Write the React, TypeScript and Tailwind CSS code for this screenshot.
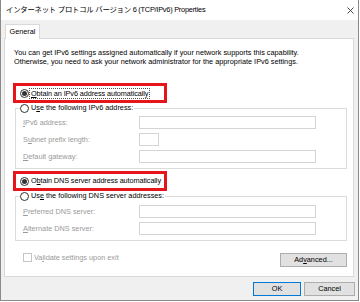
import React from "react";

function Radio({ checked }: { checked?: boolean }) {
  return (
    <span className="w-[9px] h-[9px] rounded-full border border-[#333333] bg-white flex items-center justify-center shrink-0">
      {checked && <span className="w-[5px] h-[5px] rounded-full bg-[#333333]" />}
    </span>
  );
}

function Field({ k, rest, pre, small }: { k: string; rest: string; pre?: string; small?: boolean }) {
  return (
    <div className="flex items-center h-[13px]">
      <span className="w-[116px] text-[#9a9a9a]">
        {pre}
        <span className="underline underline-offset-1">{k}</span>
        {rest}
      </span>
      <span className={small ? "w-[20px] h-[13px] border border-[#d4d4d4] bg-white" : "w-[177px] h-[13px] border border-[#d4d4d4] bg-white"} />
    </div>
  );
}

export default function App() {
  return (
    <div className="w-[360px] h-[302px] bg-white whitespace-nowrap font-['Liberation_Sans','Noto_Sans_CJK_JP',sans-serif] text-[7.3px] leading-[10px] text-black">
      <div className="w-[359px] h-[301px] border-x border-b border-[#8a8a8a] flex flex-col">
        <div className="h-[20px] shrink-0 bg-white flex items-center justify-between pl-[5px] pr-[4px]">
          <span className="text-[7.4px] tracking-[-0.25px]">インターネット プロトコル バージョン 6 (TCP/IPv6) Properties</span>
          <svg width="7" height="7" viewBox="0 0 7 7" className="block">
            <path d="M0.5 0.5 L6.5 6.5 M6.5 0.5 L0.5 6.5" stroke="#333" strokeWidth="0.9" fill="none" />
          </svg>
        </div>
        <div className="flex-1 bg-[#f0f0f0] pt-[4px] pl-[3px] flex flex-col">
          <div className="ml-[1px] w-[35px] h-[15px] -mb-[1px] bg-white border border-b-0 border-[#d9d9d9] relative z-10 flex items-center justify-center">
            General
          </div>
          <div className="w-[350px] h-[239px] bg-white border border-[#d9d9d9] flex flex-col">
            <p className="mt-[9px] ml-[9px] leading-[9px]">
              You can get IPv6 settings assigned automatically if your network supports this capability.
              <br />
              Otherwise, you need to ask your network administrator for the appropriate IPv6 settings.
            </p>

            <div className="mt-[17px] ml-[8px] w-[154px] h-[20px] border-[3px] border-[#e8141c] flex items-center pl-[4px] gap-[1px]">
              <Radio checked />
              <span className="outline outline-1 outline-dotted outline-[#555555] px-[1px] leading-[9px] tracking-[-0.1px]">
                <span className="underline underline-offset-1">O</span>btain an IPv6 address automatically
              </span>
            </div>

            <fieldset className="ml-[10px] w-[332px] border border-[#dcdcdc] pl-[7px] pt-[3px] pb-[5px]">
              <legend className="-ml-[3px] flex items-center gap-[2px] h-[10px] pr-[1px]">
                <Radio />
                <span>
                  U<span className="underline underline-offset-1">s</span>e the following IPv6 address:
                </span>
              </legend>
              <div className="flex flex-col gap-[4px]">
                <Field k="I" rest="Pv6 address:" />
                <Field pre="S" k="u" rest="bnet prefix length:" small />
                <Field k="D" rest="efault gateway:" />
              </div>
            </fieldset>

            <div className="mt-[2px] ml-[8px] w-[154px] h-[20px] border-[3px] border-[#e8141c] flex items-center pl-[4px] gap-[2px]">
              <Radio checked />
              <span className="whitespace-nowrap tracking-[-0.1px]">
                O<span className="underline underline-offset-1">b</span>tain DNS server address automatically
              </span>
            </div>

            <fieldset className="ml-[10px] w-[332px] border border-[#dcdcdc] pl-[7px] pt-[4px] pb-[5px]">
              <legend className="-ml-[3px] flex items-center gap-[2px] h-[10px] pr-[1px]">
                <Radio />
                <span>
                  Us<span className="underline underline-offset-1">e</span> the following DNS server addresses:
                </span>
              </legend>
              <div className="flex flex-col gap-[4px]">
                <Field k="P" rest="referred DNS server:" />
                <Field k="A" rest="lternate DNS server:" />
              </div>
            </fieldset>

            <div className="mt-[12px] ml-[10px] w-[332px] flex items-start justify-between">
              <div className="flex items-center gap-[2px] pl-[8px] h-[9px]">
                <span className="w-[9px] h-[9px] border border-[#c4c4c4] bg-white shrink-0" />
                <span className="text-[#9a9a9a]">
                  Va<span className="underline underline-offset-1">l</span>idate settings upon exit
                </span>
              </div>
              <div className="w-[67px] h-[14px] bg-[#e1e1e1] border border-[#adadad] flex items-center justify-center">
                <span>
                  Ad<span className="underline underline-offset-1">v</span>anced...
                </span>
              </div>
            </div>
          </div>

          <div className="flex justify-end gap-[3px] pr-[3px] mt-[5px]">
            <div className="w-[48px] h-[14px] bg-[#e1e1e1] border border-[#0078d7] flex items-center justify-center">OK</div>
            <div className="w-[51px] h-[14px] bg-[#e1e1e1] border border-[#adadad] flex items-center justify-center">Cancel</div>
          </div>
        </div>
      </div>
    </div>
  );
}
